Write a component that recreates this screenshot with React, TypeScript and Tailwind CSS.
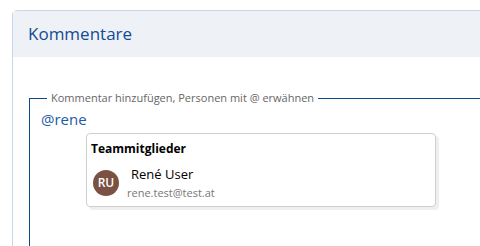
export default function App() {
  return (
    <div className="w-[480px] h-[246px] overflow-hidden bg-white" style={{ fontFamily: "'Open Sans', Lato, sans-serif" }}>
      <div className="ml-[12px] mt-[10px] w-[520px] h-[260px] rounded-tl-[5px] border border-[#c6d7ee] bg-white">
        <div className="h-[46px] bg-[#eef2f7] pl-[15px] pt-[10px] text-[17px] text-[#124b93]">Kommentare</div>
        <fieldset className="ml-[16px] mt-[33px] h-[200px] border-l border-t border-[#0e4a8a] pl-[11px]">
          <legend className="ml-[6px] px-[4px] text-[11px] text-[#666]">Kommentar hinzufügen, Personen mit @ erwähnen</legend>
          <div className="mt-[1px] text-[15px] text-[#1b5ca8]">@rene</div>
          <div className="ml-[45px] mt-[3px] w-[350px] h-[74px] rounded-[4px] border border-[#cfcfcf] bg-white shadow-[3px_3px_0_#efefef]">
            <div className="pl-[4px] pt-[6px] text-[12px] font-bold text-black">Teammitglieder</div>
            <div className="mt-[8px] flex items-center pl-[6px]">
              <div className="flex h-[26px] w-[26px] items-center justify-center rounded-full bg-[#7a5142] text-[12px] font-semibold text-white">RU</div>
              <div className="ml-[8px] leading-tight">
                <div className="pl-[4px] text-[13px] text-black">René User</div>
                <div className="mt-[4px] text-[11px] text-[#777]">rene.test@test.at</div>
              </div>
            </div>
          </div>
        </fieldset>
      </div>
    </div>
  );
}
